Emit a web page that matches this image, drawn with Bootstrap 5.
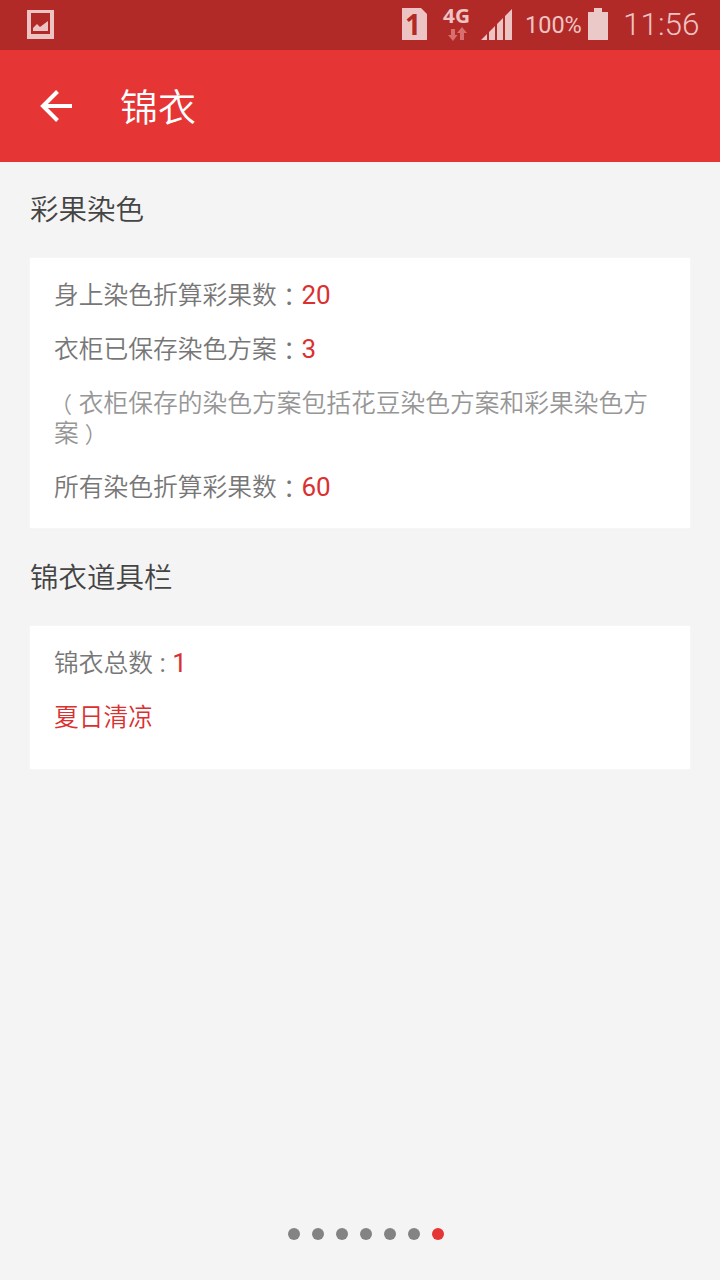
<!DOCTYPE html>
<html lang="zh-CN">
<head>
<meta charset="utf-8">
<meta name="viewport" content="width=device-width, initial-scale=1">
<title>锦衣</title>
<link href="https://cdn.jsdelivr.net/npm/bootstrap@5.3.0/dist/css/bootstrap.min.css" rel="stylesheet">
<style>
body{background:#f4f4f4;font-family:"Noto Sans CJK SC",sans-serif;font-weight:350;height:1280px;overflow:hidden}
.statusbar{height:50px;background:#b22a28;color:#edc4c3;padding-left:27px;padding-right:21px;font-family:Roboto,sans-serif}
.statusbar svg{display:block;flex:none}
.simtext{font:700 28px "Noto Sans",sans-serif}
.nettext{font:700 19px "Open Sans",sans-serif}
.battery-label{font-size:23.5px;line-height:50px;font-weight:400;width:58px;margin-left:12px;white-space:nowrap}
.clock{font-size:31.5px;line-height:54px;font-weight:350;margin-left:14px;width:76px;white-space:nowrap}
.appbar{height:112px;background:#e63535;color:#fff;padding-left:40px}
.appbar h1{font-size:38px;font-weight:350;line-height:56px;margin:-3px 0 0 48px}
.heading{font-size:28.5px;font-weight:350;line-height:36px;color:#444;margin:0}
.panel{background:#fff;padding:20px 24px 28px;font-size:24.75px;line-height:30px;color:#777;box-shadow:0 0 2px #fafafa}
.panel p{margin:0 0 24px}
.panel p:last-child{margin-bottom:0}
.num{font:400 26px/16px Roboto,sans-serif;color:#db3030}
.latin{font:400 26px/16px Roboto,sans-serif}
.hot{color:#db3030}
.note{color:#969696}
.colon{font-family:"Noto Sans CJK TC",sans-serif;line-height:16px;vertical-align:-2px}
.lp,.rp{font-size:22px;line-height:16px}
.lp{margin-left:-4px;margin-right:6.75px}
.rp{margin-left:6px}
.dot{width:12px;height:12px;border-radius:50%;background:#838383}
.dot.on{background:#e63535}
</style>
</head>
<body class="d-flex flex-column">
<header>
  <div class="statusbar d-flex align-items-center">
    <svg class="me-auto" width="28" height="50" fill="#edc4c3"><path fill-rule="evenodd" d="M0 10h27v29H0zM4 13v21h19V13z"/><path d="M6 31v-3l4-4 3 3 8-6v10z"/></svg>
    <svg width="112" height="50" viewBox="401 0 112 50" fill="#edc4c3">
      <path d="M402 8h19l6 6v26h-25z"/><text class="simtext" x="405" y="35" style="fill:#b22a28">1</text>
      <text class="nettext" x="443" y="23" textLength="27" lengthAdjust="spacingAndGlyphs">4G</text>
      <path fill="#d66f6d" d="M451 29h4v6h2.500l-4.500 6-5-6h3zM462 27l5 6h-3v7h-4v-7h-3z"/>
      <path d="M481 40l6-6v6zM489 32l6-6v14h-6zM497 24l6-6v22h-6zM505 16l7-7v31h-7z"/>
    </svg>
    <div class="battery-label">100%</div>
    <svg class="ms-1" width="22" height="50" fill="#ebc9c8"><path d="M1 12h6V8h8v4h6v28H1z"/></svg>
    <div class="clock">11:56</div>
  </div>
  <div class="appbar d-flex align-items-center">
    <svg width="32" height="32" viewBox="0 0 32 32" fill="none" stroke="#fff" stroke-width="4"><path d="M32 16H3M17.500 1.500L3 16l14.500 14.500"/></svg>
    <h1>锦衣</h1>
  </div>
</header>
<main class="flex-grow-1" style="padding:28px 30px 0">
  <h2 class="heading" style="margin-bottom:32px">彩果染色</h2>
  <section class="panel">
    <p>身上染色折算彩果数<span class="colon" lang="zh-TW">：</span><span class="num">20</span></p>
    <p>衣柜已保存染色方案<span class="colon" lang="zh-TW">：</span><span class="num">3</span></p>
    <p class="note"><span class="lp">（</span>衣柜保存的染色方案包括花豆染色方案和彩果染色方<br>案<span class="rp">）</span></p>
    <p>所有染色折算彩果数<span class="colon" lang="zh-TW">：</span><span class="num">60</span></p>
  </section>
  <h2 class="heading" style="margin:30px 0 32px">锦衣道具栏</h2>
  <section class="panel" style="padding-bottom:39px">
    <p>锦衣总数<span class="latin"> : </span><span class="num">1</span></p>
    <p class="hot">夏日清凉</p>
  </section>
</main>
<footer class="d-flex justify-content-center" style="gap:12px;padding:0 0 40px 12px">
  <i class="dot"></i><i class="dot"></i><i class="dot"></i><i class="dot"></i><i class="dot"></i><i class="dot"></i><i class="dot on"></i>
</footer>
<script src="https://cdn.jsdelivr.net/npm/bootstrap@5.3.0/dist/js/bootstrap.bundle.min.js"></script>
</body>
</html>
